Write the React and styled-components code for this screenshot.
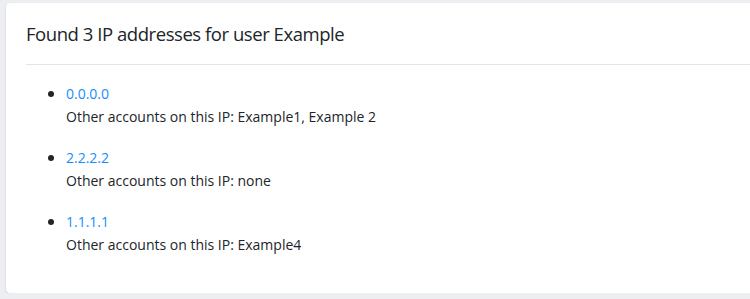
import React from 'react';
import styled, { createGlobalStyle } from 'styled-components';

const Global = createGlobalStyle`
  html, body {
    margin: 0;
    background: #eceef1;
    overflow: hidden;
  }
  body {
    padding: 3px 0 0 6px;
    font-family: 'Open Sans', 'Liberation Sans', sans-serif;
    color: #212529;
  }
`;

const Card = styled.div`
  width: 780px;
  height: 290px;
  box-sizing: border-box;
  background: #fff;
  border-radius: 4px;
  box-shadow: 0 1px 2px rgba(0, 0, 0, 0.18);
`;

const Header = styled.div`
  margin: 0 20px;
  height: 61px;
  display: flex;
  align-items: center;
  border-bottom: 1px solid #e3e4e6;
`;

const Title = styled.h3`
  margin: 0;
  font-size: 18.5px;
  font-weight: 400;
  letter-spacing: -0.45px;
`;

const Body = styled.div`
  padding: 17px 20px;
`;

const List = styled.ul`
  margin: 0;
  padding-left: 40px;
`;

const Item = styled.li`
  font-size: 14px;
  line-height: 23px;
  margin-bottom: 18px;

  &::marker {
    font-size: 16px;
  }
`;

const IpLink = styled.a`
  color: #1a8cff;
  text-decoration: none;
`;

const Note = styled.div``;

const ips = [
  { ip: '0.0.0.0', others: 'Example1, Example 2' },
  { ip: '2.2.2.2', others: 'none' },
  { ip: '1.1.1.1', others: 'Example4' },
];

export default function App() {
  return (
    <>
      <Global />
      <Card>
        <Header>
          <Title>Found 3 IP addresses for user Example</Title>
        </Header>
        <Body>
          <List>
            {ips.map(i => (
              <Item key={i.ip}>
                <IpLink href="#">{i.ip}</IpLink>
                <Note>Other accounts on this IP: {i.others}</Note>
              </Item>
            ))}
          </List>
        </Body>
      </Card>
    </>
  );
}
